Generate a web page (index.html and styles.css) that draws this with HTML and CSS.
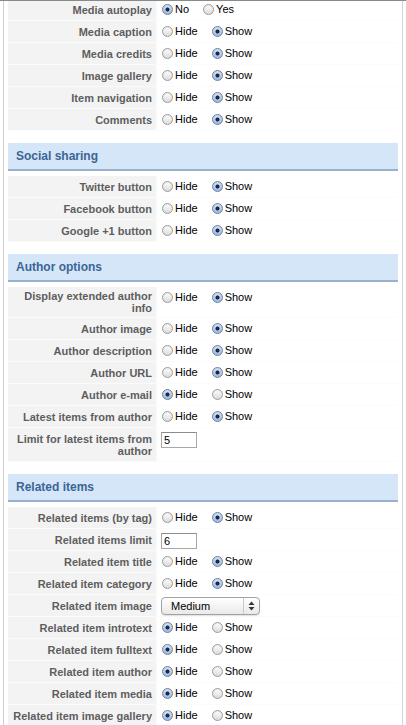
FILE: index.html
```html
<!DOCTYPE html>
<html>
<head>
<meta charset="utf-8">
<link rel="stylesheet" href="styles.css">
</head>
<body>
<div class="frame">
<div class="panel">

  <div class="group first">
    <div class="row"><div class="key">Media autoplay</div><div class="val"><label class="opt"><input type="radio" name="r1" checked><span>No</span></label><label class="opt"><input type="radio" name="r1"><span>Yes</span></label></div></div>
    <div class="row"><div class="key">Media caption</div><div class="val"><label class="opt"><input type="radio" name="r2"><span>Hide</span></label><label class="opt"><input type="radio" name="r2" checked><span>Show</span></label></div></div>
    <div class="row"><div class="key">Media credits</div><div class="val"><label class="opt"><input type="radio" name="r3"><span>Hide</span></label><label class="opt"><input type="radio" name="r3" checked><span>Show</span></label></div></div>
    <div class="row"><div class="key">Image gallery</div><div class="val"><label class="opt"><input type="radio" name="r4"><span>Hide</span></label><label class="opt"><input type="radio" name="r4" checked><span>Show</span></label></div></div>
    <div class="row"><div class="key">Item navigation</div><div class="val"><label class="opt"><input type="radio" name="r5"><span>Hide</span></label><label class="opt"><input type="radio" name="r5" checked><span>Show</span></label></div></div>
    <div class="row"><div class="key">Comments</div><div class="val"><label class="opt"><input type="radio" name="r6"><span>Hide</span></label><label class="opt"><input type="radio" name="r6" checked><span>Show</span></label></div></div>
  </div>

  <div class="group">
    <h3 class="group-title">Social sharing</h3>
    <div class="row"><div class="key">Twitter button</div><div class="val"><label class="opt"><input type="radio" name="s1"><span>Hide</span></label><label class="opt"><input type="radio" name="s1" checked><span>Show</span></label></div></div>
    <div class="row"><div class="key">Facebook button</div><div class="val"><label class="opt"><input type="radio" name="s2"><span>Hide</span></label><label class="opt"><input type="radio" name="s2" checked><span>Show</span></label></div></div>
    <div class="row"><div class="key">Google +1 button</div><div class="val"><label class="opt"><input type="radio" name="s3"><span>Hide</span></label><label class="opt"><input type="radio" name="s3" checked><span>Show</span></label></div></div>
  </div>

  <div class="group">
    <h3 class="group-title">Author options</h3>
    <div class="row"><div class="key">Display extended author info</div><div class="val"><label class="opt"><input type="radio" name="a1"><span>Hide</span></label><label class="opt"><input type="radio" name="a1" checked><span>Show</span></label></div></div>
    <div class="row"><div class="key">Author image</div><div class="val"><label class="opt"><input type="radio" name="a2"><span>Hide</span></label><label class="opt"><input type="radio" name="a2" checked><span>Show</span></label></div></div>
    <div class="row"><div class="key">Author description</div><div class="val"><label class="opt"><input type="radio" name="a3"><span>Hide</span></label><label class="opt"><input type="radio" name="a3" checked><span>Show</span></label></div></div>
    <div class="row"><div class="key">Author URL</div><div class="val"><label class="opt"><input type="radio" name="a4"><span>Hide</span></label><label class="opt"><input type="radio" name="a4" checked><span>Show</span></label></div></div>
    <div class="row"><div class="key">Author e-mail</div><div class="val"><label class="opt"><input type="radio" name="a5" checked><span>Hide</span></label><label class="opt"><input type="radio" name="a5"><span>Show</span></label></div></div>
    <div class="row"><div class="key">Latest items from author</div><div class="val"><label class="opt"><input type="radio" name="a6"><span>Hide</span></label><label class="opt"><input type="radio" name="a6" checked><span>Show</span></label></div></div>
    <div class="row"><div class="key">Limit for latest items from author</div><div class="val tall"><input class="num" type="text" value="5"></div></div>
  </div>

  <div class="group">
    <h3 class="group-title">Related items</h3>
    <div class="row"><div class="key">Related items (by tag)</div><div class="val"><label class="opt"><input type="radio" name="b1"><span>Hide</span></label><label class="opt"><input type="radio" name="b1" checked><span>Show</span></label></div></div>
    <div class="row"><div class="key">Related items limit</div><div class="val"><input class="num" type="text" value="6"></div></div>
    <div class="row"><div class="key">Related item title</div><div class="val"><label class="opt"><input type="radio" name="b3"><span>Hide</span></label><label class="opt"><input type="radio" name="b3" checked><span>Show</span></label></div></div>
    <div class="row"><div class="key">Related item category</div><div class="val"><label class="opt"><input type="radio" name="b4"><span>Hide</span></label><label class="opt"><input type="radio" name="b4" checked><span>Show</span></label></div></div>
    <div class="row"><div class="key">Related item image</div><div class="val"><span class="select"><select><option>Medium</option></select><span class="stepper"><svg width="7" height="10" viewBox="0 0 7 10"><path d="M3.5 0.5 L6.5 4 L0.5 4 Z" fill="#333"/><path d="M0.5 6 L6.5 6 L3.5 9.5 Z" fill="#333"/></svg></span></span></div></div>
    <div class="row"><div class="key">Related item introtext</div><div class="val"><label class="opt"><input type="radio" name="b6" checked><span>Hide</span></label><label class="opt"><input type="radio" name="b6"><span>Show</span></label></div></div>
    <div class="row"><div class="key">Related item fulltext</div><div class="val"><label class="opt"><input type="radio" name="b7" checked><span>Hide</span></label><label class="opt"><input type="radio" name="b7"><span>Show</span></label></div></div>
    <div class="row"><div class="key">Related item author</div><div class="val"><label class="opt"><input type="radio" name="b8" checked><span>Hide</span></label><label class="opt"><input type="radio" name="b8"><span>Show</span></label></div></div>
    <div class="row"><div class="key">Related item media</div><div class="val"><label class="opt"><input type="radio" name="b9" checked><span>Hide</span></label><label class="opt"><input type="radio" name="b9"><span>Show</span></label></div></div>
    <div class="row"><div class="key">Related item image gallery</div><div class="val"><label class="opt"><input type="radio" name="b10" checked><span>Hide</span></label><label class="opt"><input type="radio" name="b10"><span>Show</span></label></div></div>
  </div>

</div>
</div>
</body>
</html>
```

FILE: styles.css
```css
* { box-sizing: border-box; }

html, body {
  margin: 0;
  padding: 0;
  background: #fff;
}

body {
  font-family: "Liberation Sans", Arial, sans-serif;
  font-size: 11px;
  color: #000;
}

.frame {
  height: 725px;
  overflow: hidden;
  border-top: 1px solid #8a8a8a;
}

.panel {
  margin-left: 3px;
  width: 400px;
  min-height: 100%;
  padding: 0 4px;
  border-left: 1px solid #cfcfcf;
  border-right: 1px solid #d4d4d4;
}

.group {
  margin-bottom: 12px;
}

.group.first {
  margin-top: -2px;
}

.group-title {
  margin: 0 0 5px;
  height: 28px;
  line-height: 26px;
  padding-left: 8px;
  background: #d5e6f8;
  border-bottom: 2px solid #98b1cd;
  font-size: 12px;
  font-weight: bold;
  color: #3b6596;
}

.row {
  display: grid;
  grid-template-columns: 149px 1fr;
  border-bottom: 1px solid #fbfbfb;
}

.key {
  display: flex;
  align-items: center;
  justify-content: flex-end;
  text-align: right;
  padding: 3px 4px 3px 4px;
  background: #f3f3f3;
  border-right: 1px solid #fafafa;
  color: #5e5e5e;
  font-weight: bold;
  line-height: 12px;
}

.val {
  display: flex;
  align-items: flex-start;
  min-height: 21px;
}

.val.tall {
  min-height: 33px;
}

.opt {
  display: inline-flex;
  align-items: center;
  height: 20px;
  margin-right: 9px;
  cursor: default;
}

.opt input {
  -webkit-appearance: none;
  appearance: none;
  width: 11px;
  height: 11px;
  margin: 0 2px 0 5px;
  border-radius: 50%;
  border: 1px solid #9c9c9c;
  background: linear-gradient(#ffffff, #dadada);
  box-shadow: inset 0 1px 1px rgba(0,0,0,0.08);
}

.opt input:checked {
  border-color: #6d80a1;
  background:
    radial-gradient(circle, #17284a 0, #17284a 1.6px, rgba(23,40,74,0) 2.4px),
    linear-gradient(#dce7f6, #9db8dd);
}

.num {
  width: 36px;
  height: 16px;
  margin: 4px 0 0 4px;
  padding: 0 2px;
  border: 1px solid #a8a8a8;
  border-top-color: #8c8c8c;
  font-family: "Liberation Sans", Arial, sans-serif;
  font-size: 11px;
  color: #000;
  background: #fff;
  outline: none;
}

.select {
  position: relative;
  display: inline-block;
  margin: 2px 0 0 4px;
  width: 99px;
  height: 18px;
}

.select select {
  -webkit-appearance: none;
  appearance: none;
  width: 99px;
  height: 18px;
  margin: 0;
  padding: 0 0 0 9px;
  border: 1px solid #a2a2a2;
  border-radius: 4px;
  background: linear-gradient(#ffffff, #e9e9e9);
  font-family: "Liberation Sans", Arial, sans-serif;
  font-size: 11px;
  color: #000;
  box-shadow: 0 1px 1px rgba(0,0,0,0.12);
}

.stepper {
  position: absolute;
  top: 1px;
  right: 1px;
  bottom: 1px;
  width: 16px;
  border-left: 1px solid #c9c9c9;
  display: flex;
  align-items: center;
  justify-content: center;
  pointer-events: none;
}
```
